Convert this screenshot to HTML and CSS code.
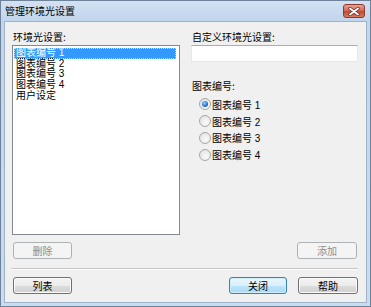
FILE: index.html
```html
<!DOCTYPE html>
<html lang="zh-CN">
<head>
<meta charset="utf-8">
<title>管理环境光设置</title>
<link rel="stylesheet" href="styles.css">
</head>
<body>
<div class="window">
  <div class="titlebar">
    <span class="title">管理环境光设置</span>
    <button class="close" aria-label="关闭">
      <svg width="12" height="9" viewBox="0 0 12 9">
        <path d="M2 1.5 L10 7.5 M10 1.5 L2 7.5" stroke="#5a2a22" stroke-width="3.2" stroke-linecap="round"/>
        <path d="M2 1.5 L10 7.5 M10 1.5 L2 7.5" stroke="#ffffff" stroke-width="1.8" stroke-linecap="round"/>
      </svg>
    </button>
  </div>
  <div class="client">
    <div class="main">
      <div class="col">
        <div class="label">环境光设置:</div>
        <ul class="listbox">
          <li class="item selected">图表编号 1</li>
          <li class="item">图表编号 2</li>
          <li class="item">图表编号 3</li>
          <li class="item">图表编号 4</li>
          <li class="item">用户设定</li>
        </ul>
        <button class="btn disabled w59">删除</button>
      </div>
      <div class="col">
        <div class="label">自定义环境光设置:</div>
        <div class="textbox"></div>
        <div class="label group-label">图表编号:</div>
        <div class="radios">
          <div class="radio-row"><span class="radio checked"></span><span>图表编号 1</span></div>
          <div class="radio-row"><span class="radio"></span><span>图表编号 2</span></div>
          <div class="radio-row"><span class="radio"></span><span>图表编号 3</span></div>
          <div class="radio-row"><span class="radio"></span><span>图表编号 4</span></div>
        </div>
        <button class="btn disabled w60 push-right">添加</button>
      </div>
    </div>
    <div class="separator"></div>
    <div class="actions">
      <button class="btn w59">列表</button>
      <div class="spacer"></div>
      <button class="btn default w58">关闭</button>
      <button class="btn w60">帮助</button>
    </div>
  </div>
</div>
</body>
</html>
```
FILE: styles.css
```css
* { box-sizing: border-box; }
html, body { margin: 0; padding: 0; background: #ffffff; }
body {
  font-family: "Noto Sans CJK SC", "Liberation Sans", sans-serif;
  font-size: 10px;
  color: #000;
}
.window {
  width: 371px;
  height: 307px;
  border: 1px solid #6e8399;
  background: linear-gradient(#d3e1f2, #c1d5ec 20px, #c9dcf0);
  display: flex;
  flex-direction: column;
}
.titlebar {
  height: 19px;
  display: flex;
  align-items: center;
  justify-content: space-between;
  padding: 0 3px 0 4px;
}
.title { font-size: 10px; line-height: 12px; color: #000; }
.close {
  width: 22px;
  height: 14px;
  margin-top: 1px;
  padding: 0;
  border: 1px solid #8a3c2f;
  border-radius: 3px;
  background: linear-gradient(#e8a193, #d46c57 45%, #c44a32 55%, #d77a62);
  display: flex;
  align-items: center;
  justify-content: center;
  margin-right: 2px;
}
.close svg { display: block; }
.client {
  flex: 1;
  margin: 1px 3px 3px 3px;
  background: #f0f0f0;
  border: 1px solid #9fb2c7;
  display: flex;
  flex-direction: column;
}
.main {
  display: grid;
  grid-template-columns: 168px 167px;
  column-gap: 11px;
  padding: 9px 8px 0 7px;
}
.col { display: flex; flex-direction: column; }
.label { line-height: 12px; height: 12px; white-space: nowrap; padding-left: 1px; }
.listbox {
  list-style: none;
  margin: 2px 0 0 0;
  padding: 2px 0 0 1px;
  height: 190px;
  background: #fff;
  border: 1px solid #828790;
}
.item {
  line-height: 10.7px;
  height: 10.7px;
  padding-left: 2px;
  margin-right: 3px;
  white-space: nowrap;
  font-family: "Liberation Sans", "Noto Sans CJK SC", sans-serif;
}
.item.selected {
  background: #3399ff;
  color: #fff;
  outline: 1px dotted #b9d9ff;
  outline-offset: -1px;
}
.btn {
  font-family: "Noto Sans CJK SC", "Liberation Sans", sans-serif;
  font-size: 10px;
  line-height: 13px;
  height: 17px;
  padding: 0;
  border: 1px solid #707070;
  border-radius: 3px;
  color: #000;
  background: linear-gradient(#f3f3f3, #ececec 50%, #dddddd 51%, #d0d0d0);
  box-shadow: inset 0 0 0 1px #fbfbfb;
}
.btn.disabled {
  border-color: #adb2b5;
  background: #f4f4f4;
  box-shadow: none;
  color: #8d8d8d;
}
.btn.default {
  border-color: #3c7fb1;
  background: linear-gradient(#eaf6fd, #d9f0fc 50%, #bee6fd 51%, #a7d9f5);
  box-shadow: inset 0 0 0 1px #cfeefc;
}
.w58 { width: 58px; }
.w59 { width: 59px; }
.w60 { width: 60px; }
.col > .btn.w59 { margin: 7px 0 0 1px; }
.push-right { margin: auto 1px 0 auto; }
.textbox {
  margin-top: 2px;
  height: 17px;
  background: #fff;
  border: 1px solid #e3e9ef;
  border-top-color: #abadb3;
}
.group-label { margin-top: 18px; }
.radios { margin-top: 4px; }
.radio-row {
  height: 16.8px;
  display: flex;
  align-items: center;
  padding-left: 8px;
  gap: 1px;
  font-family: "Liberation Sans", "Noto Sans CJK SC", sans-serif;
  white-space: nowrap;
}
.radio {
  width: 12px;
  height: 12px;
  border-radius: 50%;
  border: 1px solid #a8a8a8;
  background: radial-gradient(circle at 60% 65%, #fbfbfb, #e6e6e6 70%, #d6d6d6);
  display: flex;
  align-items: center;
  justify-content: center;
  flex: none;
}
.radio.checked::after {
  content: "";
  width: 6px;
  height: 6px;
  border-radius: 50%;
  background: radial-gradient(circle at 40% 35%, #8fd0ff, #1e6fd6 60%, #123f8a);
}
.separator {
  height: 1px;
  background: #c5c5c5;
  border-bottom: 1px solid #ffffff;
  box-sizing: content-box;
  margin: 9px 8px 0 6px;
}
.actions {
  display: flex;
  gap: 11px;
  padding: 7px 8px 0 8px;
}
.spacer { flex: 1; }
```
